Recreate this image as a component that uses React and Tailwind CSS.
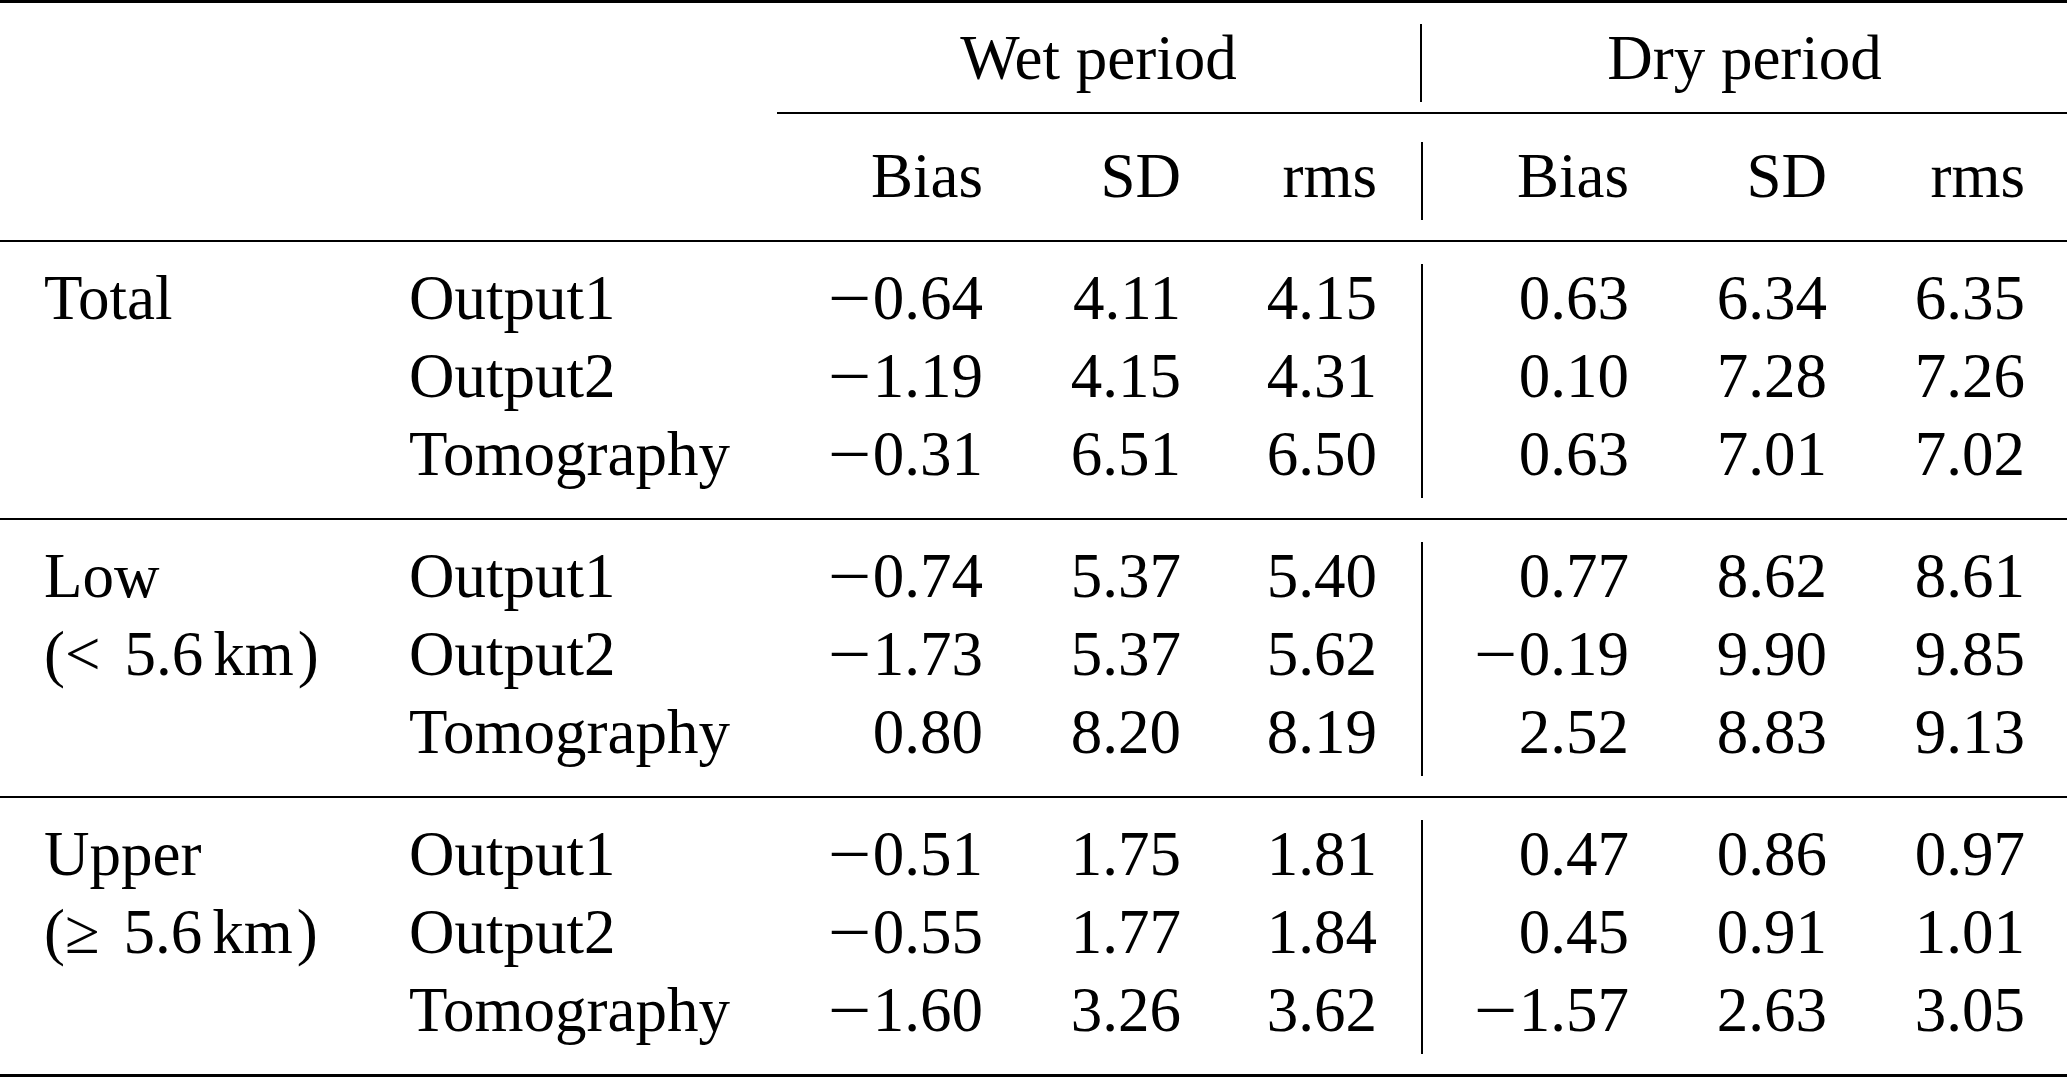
const groups = [
  [
    ["Total", "Output1", "−0.64", "4.11", "4.15", "0.63", "6.34", "6.35"],
    ["", "Output2", "−1.19", "4.15", "4.31", "0.10", "7.28", "7.26"],
    ["", "Tomography", "−0.31", "6.51", "6.50", "0.63", "7.01", "7.02"],
  ],
  [
    ["Low", "Output1", "−0.74", "5.37", "5.40", "0.77", "8.62", "8.61"],
    [{ rel: "<" }, "Output2", "−1.73", "5.37", "5.62", "−0.19", "9.90", "9.85"],
    ["", "Tomography", "0.80", "8.20", "8.19", "2.52", "8.83", "9.13"],
  ],
  [
    ["Upper", "Output1", "−0.51", "1.75", "1.81", "0.47", "0.86", "0.97"],
    [{ rel: "≥" }, "Output2", "−0.55", "1.77", "1.84", "0.45", "0.91", "1.01"],
    ["", "Tomography", "−1.60", "3.26", "3.62", "−1.57", "2.63", "3.05"],
  ],
];

// "(< 5.6 km)" style label, spaced like the typeset original
function Label({ value }) {
  if (typeof value === "string") return value;
  return (
    <>
      ({value.rel}
      <span className="ml-[24px]">5.6</span>
      <span className="ml-[10px]">km</span>
      <span className="ml-[4px]">)</span>
    </>
  );
}

// minus sign is a bit longer in the original, so stretch it
function Num({ value }) {
  if (!value.startsWith("−")) return value;
  return (
    <>
      <span className="inline-block w-[46px] text-center">
        <span className="inline-block scale-x-[1.22]">−</span>
      </span>
      {value.slice(1)}
    </>
  );
}

function Row({ cells }) {
  return (
    <div className="flex h-[78px] leading-[68px] whitespace-nowrap">
      <div className="w-[409px] pl-[44px]">
        <Label value={cells[0]} />
      </div>
      <div className="w-[368px]">{cells[1]}</div>
      <div className="w-[206px] text-right"><Num value={cells[2]} /></div>
      <div className="w-[198px] text-right"><Num value={cells[3]} /></div>
      <div className="w-[242px] pr-[44px] text-right border-r-2 border-black"><Num value={cells[4]} /></div>
      <div className="w-[206px] text-right"><Num value={cells[5]} /></div>
      <div className="w-[198px] text-right"><Num value={cells[6]} /></div>
      <div className="w-[198px] text-right"><Num value={cells[7]} /></div>
    </div>
  );
}

export default function App() {
  return (
    <div
      className="w-[2067px] h-[1079px] bg-white text-black text-[63px] overflow-hidden"
      style={{ fontFamily: '"Liberation Serif", "Times New Roman", serif' }}
    >
      {/* top rule */}
      <div className="h-[3px] bg-black" />
      <div className="h-[21px]" />

      {/* spanning header */}
      <div className="flex h-[78px] leading-[68px]">
        <div className="w-[777px]" />
        <div className="w-[645px] text-center border-r-2 border-black">Wet period</div>
        <div className="flex-1 text-center">Dry period</div>
      </div>
      <div className="h-[10px]" />
      <div className="flex">
        <div className="w-[777px]" />
        <div className="flex-1 h-[2px] bg-black" />
      </div>
      <div className="h-[28px]" />

      <Row cells={["", "", "Bias", "SD", "rms", "Bias", "SD", "rms"]} />
      <div className="h-[20px]" />
      <div className="h-[2px] bg-black" />
      <div className="h-[22px]" />

      {groups.map((rows, gi) => (
        <div key={gi}>
          {rows.map((r, ri) => (
            <Row key={ri} cells={r} />
          ))}
          {gi < groups.length - 1 ? (
            <>
              <div className="h-[20px]" />
              <div className="h-[2px] bg-black" />
              <div className="h-[22px]" />
            </>
          ) : (
            <>
              <div className="h-[20px]" />
              <div className="h-[3px] bg-black" />
            </>
          )}
        </div>
      ))}
    </div>
  );
}
